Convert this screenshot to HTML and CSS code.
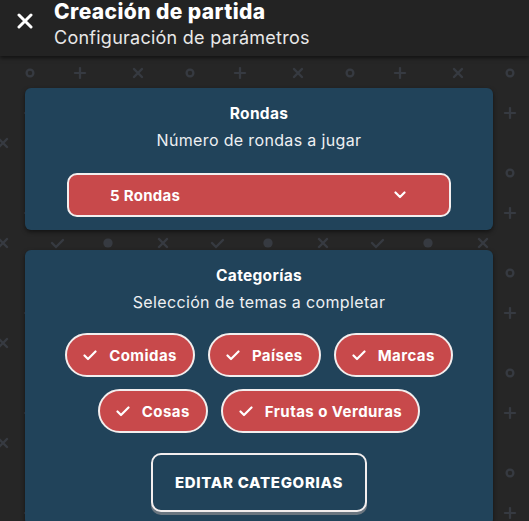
FILE: index.html
```html
<!DOCTYPE html>
<html lang="es">
<head>
<meta charset="utf-8">
<title>Creación de partida</title>
<link rel="stylesheet" href="styles.css">
</head>
<body>
<header class="topbar">
  <button class="close" aria-label="Cerrar">
    <svg width="16" height="16" viewBox="0 0 16 16"><path d="M2 2L14 14M14 2L2 14" stroke="#fff" stroke-width="3" stroke-linecap="round"/></svg>
  </button>
  <div class="titles">
    <h1 class="title">Creación de partida</h1>
    <p class="subtitle">Configuración de parámetros</p>
  </div>
</header>
<main class="content">
  <section class="card">
    <h2 class="card-title">Rondas</h2>
    <p class="card-sub">Número de rondas a jugar</p>
    <div class="select">
      <span>5 Rondas</span>
      <svg class="chev" width="12" height="8" viewBox="0 0 12 8"><path d="M1.5 1.5L6 6L10.5 1.5" fill="none" stroke="#fff" stroke-width="2.2" stroke-linecap="round" stroke-linejoin="round"/></svg>
    </div>
  </section>
  <section class="card">
    <h2 class="card-title">Categorías</h2>
    <p class="card-sub">Selección de temas a completar</p>
    <div class="chips">
      <span class="chip"><svg class="check" width="14" height="11" viewBox="0 0 14 11"><path d="M1.5 5.5L5 9L12.5 1.5" fill="none" stroke="#fff" stroke-width="2.2" stroke-linecap="round" stroke-linejoin="round"/></svg>Comidas</span>
      <span class="chip"><svg class="check" width="14" height="11" viewBox="0 0 14 11"><path d="M1.5 5.5L5 9L12.5 1.5" fill="none" stroke="#fff" stroke-width="2.2" stroke-linecap="round" stroke-linejoin="round"/></svg>Países</span>
      <span class="chip"><svg class="check" width="14" height="11" viewBox="0 0 14 11"><path d="M1.5 5.5L5 9L12.5 1.5" fill="none" stroke="#fff" stroke-width="2.2" stroke-linecap="round" stroke-linejoin="round"/></svg>Marcas</span>
      <span class="chip"><svg class="check" width="14" height="11" viewBox="0 0 14 11"><path d="M1.5 5.5L5 9L12.5 1.5" fill="none" stroke="#fff" stroke-width="2.2" stroke-linecap="round" stroke-linejoin="round"/></svg>Cosas</span>
      <span class="chip"><svg class="check" width="14" height="11" viewBox="0 0 14 11"><path d="M1.5 5.5L5 9L12.5 1.5" fill="none" stroke="#fff" stroke-width="2.2" stroke-linecap="round" stroke-linejoin="round"/></svg>Frutas o Verduras</span>
    </div>
    <button class="edit">EDITAR CATEGORIAS</button>
  </section>
</main>
</body>
</html>
```
FILE: styles.css
```css
* { box-sizing: border-box; }
html, body { margin: 0; padding: 0; }
body {
  font-family: Inter, "Open Sans", sans-serif;
  color: #fff;
  height: 521px;
  overflow: hidden;
  background-color: #262626;
  background-image: url("data:image/svg+xml;utf8,<svg xmlns='http://www.w3.org/2000/svg' width='160' height='100'><g stroke='%23363a41' stroke-width='2.2' fill='none' stroke-linecap='round'><circle cx='30' cy='73' r='3.4'/><path d='M80 68v10M75 73h10'/><path d='M134 69l8 8M142 69l-8 8'/><path d='M30 8v10M25 13h10'/><path d='M-1 39l8 8M7 39l-8 8'/><path d='M159 39l8 8M167 39l-8 8'/><path d='M52 43l4 4l7-7'/></g><circle cx='108' cy='43' r='4.6' fill='%23363a41'/></svg>");
  background-repeat: repeat;
}
.topbar {
  height: 56px;
  background: #232323;
  box-shadow: 0 2px 4px rgba(0,0,0,0.55);
  display: flex;
  align-items: flex-start;
  position: relative;
  z-index: 1;
}
.close {
  background: none;
  border: 0;
  padding: 0;
  margin: 13px 0 0 17px;
  width: 16px;
  height: 16px;
  display: flex;
}
.titles { margin-left: 21px; }
.title {
  margin: 0;
  font-size: 21px;
  font-weight: 800;
  line-height: 24px;
  letter-spacing: 0.4px;
}
.subtitle {
  margin: 3px 0 0;
  font-size: 18px;
  line-height: 22px;
  letter-spacing: 0.25px;
  color: #e8e8e8;
}
.content {
  padding: 32px 36px 0 25px;
  display: flex;
  flex-direction: column;
  gap: 20px;
}
.card {
  background: #21435a;
  border-radius: 6px;
  box-shadow: 0 2px 4px rgba(0,0,0,0.5);
  padding: 15px 42px 13px;
  display: flex;
  flex-direction: column;
  align-items: center;
}
.card-title {
  margin: 0;
  font-size: 15.5px;
  font-weight: 700;
  line-height: 22px;
  letter-spacing: 0.3px;
}
.card-sub {
  margin: 4px 0 0;
  font-size: 16px;
  line-height: 22px;
  letter-spacing: 0.35px;
  color: #eef0f2;
}
.select {
  margin-top: 22px;
  width: 100%;
  height: 44px;
  background: #c8494b;
  border: 2px solid #f3eeee;
  border-radius: 10px;
  display: flex;
  align-items: center;
  justify-content: space-between;
  padding: 0 43px 0 41px;
  font-size: 15px;
  font-weight: 700;
  letter-spacing: 0.3px;
}
.chev { display: block; }
.chips {
  margin: 20px -20px 0;
  display: flex;
  flex-wrap: wrap;
  justify-content: center;
  gap: 12px 13px;
}
.chip {
  height: 44px;
  background: #c8494b;
  border: 2px solid #f3eeee;
  border-radius: 22px;
  display: flex;
  align-items: center;
  gap: 12px;
  padding: 0 16px 0 16px;
  font-size: 15px;
  font-weight: 700;
  letter-spacing: 0.45px;
}
.check { display: block; }
.edit {
  margin-top: 20px;
  width: 216px;
  height: 59px;
  background: #21435a;
  border: 2px solid #f3eeee;
  border-radius: 10px;
  box-shadow: 0 3px 0 #6b7680;
  color: #fff;
  font-family: inherit;
  font-size: 15px;
  font-weight: 800;
  letter-spacing: 0.7px;
}
```
